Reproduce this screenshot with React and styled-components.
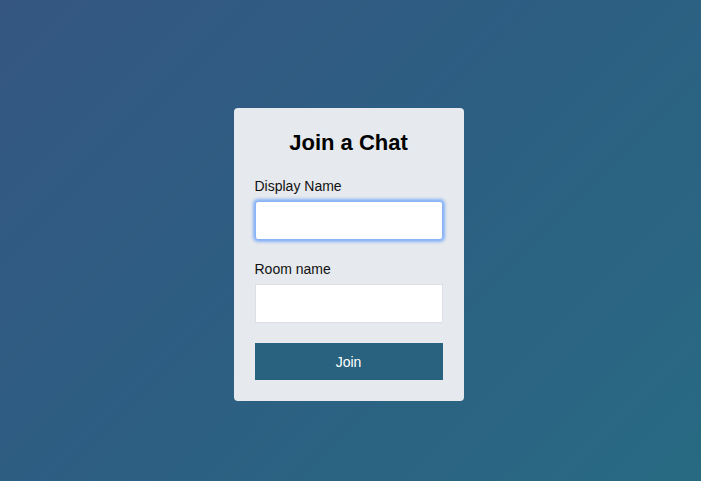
import React from 'react';
import styled, { createGlobalStyle } from 'styled-components';

const GlobalStyle = createGlobalStyle`
  html, body {
    margin: 0;
    padding: 0;
    height: 100%;
  }
  body {
    font-family: "Liberation Sans", Arial, sans-serif;
  }
  #root {
    height: 100%;
  }
`;

const App = () => {
  return (
    <>
      <GlobalStyle />
      <Page>
        <Card>
          <Title>Join a Chat</Title>
          <Field>
            <Label>Display Name</Label>
            <Input type="text" focused />
          </Field>
          <Field>
            <Label>Room name</Label>
            <Input type="text" />
          </Field>
          <Button>Join</Button>
        </Card>
      </Page>
    </>
  );
};

export default App;

// Component Styled CSS
const Page = styled.div`
  width: 100%;
  height: 100vh;
  display: flex;
  align-items: center;
  justify-content: center;
  background: linear-gradient(135deg, #345681 0%, #2d5f83 50%, #286a82 100%);
`;

const Card = styled.div`
  width: 188px;
  padding: 22px 21px 21px;
  background-color: #e6e9ed;
  border-radius: 4px;
  display: flex;
  flex-direction: column;
  gap: 21px;
  margin: 28px 4px 0 0;
`;

const Title = styled.h1`
  margin: 0 0 1px;
  font-size: 22px;
  line-height: 26px;
  font-weight: bold;
  text-align: center;
  color: #000;
`;

const Field = styled.div`
  display: flex;
  flex-direction: column;
  gap: 6px;
`;

const Label = styled.label`
  font-size: 14px;
  line-height: 17px;
  color: #111;
`;

const Input = styled.input.withConfig({ shouldForwardProp: (p) => p !== 'focused' })`
  box-sizing: border-box;
  width: 100%;
  height: 39px;
  margin: 0;
  padding: 0 8px;
  background: #fff;
  border: 1px solid ${(p) => (p.focused ? '#8ab4f5' : '#dcdfe3')};
  border-radius: ${(p) => (p.focused ? '3px' : '0')};
  box-shadow: ${(p) => (p.focused ? '0 0 3px 2px rgba(110, 165, 250, 0.8)' : 'none')};
  outline: none;
  font-size: 14px;
`;

const Button = styled.button`
  height: 37px;
  border: none;
  margin-top: -1px;
  background-color: #29627f;
  color: #fff;
  font-family: "Liberation Sans", Arial, sans-serif;
  font-size: 14px;
  cursor: pointer;
`;
